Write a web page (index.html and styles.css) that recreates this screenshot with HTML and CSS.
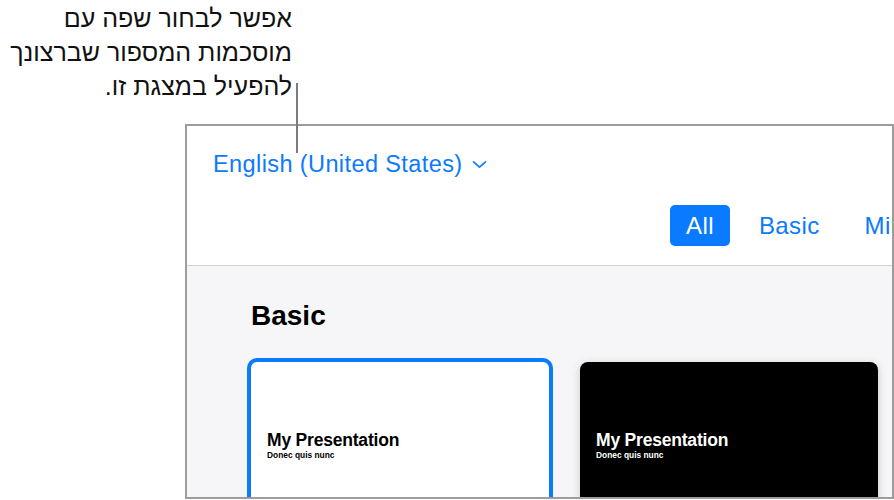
FILE: index.html
```html
<!DOCTYPE html>
<html lang="he">
<head>
    <meta charset="UTF-8">
    <title>בחירת שפה</title>
    <link rel="stylesheet" href="styles.css">
</head>
<body>
    <div class="page">
        <!-- הסבר -->
        <div class="note" dir="rtl">
            אפשר לבחור שפה עם<br>
            מוסכמות המספור שברצונך<br>
            להפעיל במצגת זו.
        </div>
        <div class="leader"></div>

        <div class="frame" dir="ltr">
            <div class="frame-head">
                <div class="lang">
                    <span>English (United States)</span>
                    <svg class="chevron" width="15" height="9" viewBox="0 0 15 9">
                        <path d="M1.5 1.8 L7.5 7.2 L13.5 1.8" fill="none" stroke="#0a7aff" stroke-width="1.6" stroke-linecap="round" stroke-linejoin="round"/>
                    </svg>
                </div>
                <ul class="tabs">
                    <li class="active">All</li>
                    <li>Basic</li>
                    <li>Minimalist</li>
                </ul>
            </div>
            <div class="frame-body">
                <h2>Basic</h2>
                <div class="cards">
                    <div class="card selected">
                        <div class="card-title">My Presentation</div>
                        <div class="card-sub">Donec quis nunc</div>
                    </div>
                    <div class="card dark">
                        <div class="card-title">My Presentation</div>
                        <div class="card-sub">Donec quis nunc</div>
                    </div>
                </div>
            </div>
        </div>
    </div>
</body>
</html>
```
FILE: styles.css
```css
* {
    margin: 0;
    padding: 0;
    box-sizing: border-box;
}
ul li {
    list-style: none;
}
body {
    width: 894px;
    height: 500px;
    overflow: hidden;
    background: #fff;
    font-family: "Liberation Sans", Arial, sans-serif;
}
.page {
    position: relative;
    height: 500px;
}
.note {
    width: 292px;
    height: 104px;
    padding-top: 1px;
    font-size: 25px;
    line-height: 34px;
    color: #111;
    text-align: right;
    white-space: nowrap;
}
/* קו מצביע מעל המסגרת */
.leader {
    position: absolute;
    left: 296px;
    top: 83px;
    width: 2px;
    height: 70px;
    background: #7c7c7c;
    z-index: 2;
}
.frame {
    margin-top: 20px;
    margin-left: 185px;
    width: 709px;
    height: 375px;
    border: 2px solid #9d9d9d;
    overflow: hidden;
}
.frame-head {
    height: 140px;
    padding-top: 25px;
    border-bottom: 1px solid #d2d2d2;
    background: #fff;
}
.lang {
    display: flex;
    align-items: center;
    padding-left: 26px;
    font-size: 23.5px;
    line-height: 26px;
    letter-spacing: 0.4px;
    color: #0a7aff;
}
.chevron {
    margin-left: 9px;
    margin-top: 1px;
}
.tabs {
    display: flex;
    gap: 13px;
    margin-top: 28px;
    padding-left: 483px;
    white-space: nowrap;
}
.tabs li {
    height: 41px;
    padding: 0 16px;
    font-size: 24px;
    line-height: 41px;
    letter-spacing: 0.4px;
    color: #0a7aff;
    border-radius: 5px;
}
.tabs li.active {
    background: #0a7aff;
    color: #fff;
}
.frame-body {
    height: 240px;
    padding-top: 34px;
    padding-left: 64px;
    background: #f6f6f8;
}
.frame-body h2 {
    font-size: 28px;
    line-height: 32px;
    font-weight: bold;
    color: #000;
}
.cards {
    display: flex;
    gap: 31px;
    margin-top: 30px;
}
.card {
    flex: none;
    width: 298px;
    height: 200px;
    padding: 68px 0 0 16px;
    border-radius: 8px;
    background: #fff;
    color: #000;
}
.card.selected {
    outline: 4px solid #0a7aff;
    border-radius: 6px;
}
.card.dark {
    background: #000;
    color: #fff;
    box-shadow: 0 2px 10px rgba(0,0,0,.18);
}
.card-title {
    font-size: 17.5px;
    line-height: 20px;
    font-weight: bold;
    letter-spacing: -0.2px;
}
.card-sub {
    font-size: 8.4px;
    line-height: 10px;
    font-weight: bold;
}
```
